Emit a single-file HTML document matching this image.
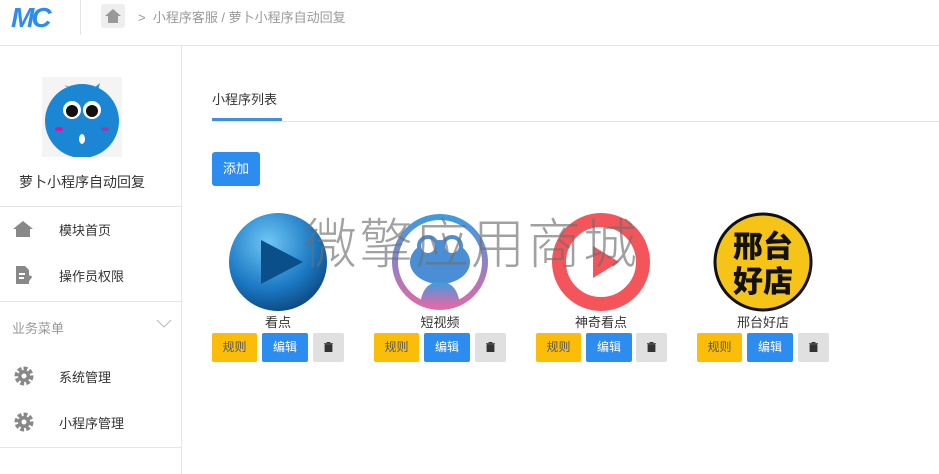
<!DOCTYPE html>
<html><head><meta charset="utf-8"><style>
*{margin:0;padding:0;box-sizing:border-box}
body{width:939px;height:474px;overflow:hidden;background:#fff;font-family:"Liberation Sans","Noto Sans CJK SC",sans-serif;font-size:13px;color:#333;position:relative}
.a{position:absolute}
.hdr{left:0;top:0;width:939px;height:46px;border-bottom:1px solid #e5e5e5}
.side{left:0;top:46px;width:182px;height:428px;border-right:1px solid #e5e5e5}
.hl{position:absolute;left:0;width:181px;height:1px;background:#e5e5e5}
.mi{position:absolute;left:59px;font-size:13px;color:#333}
.btn{position:absolute;height:29px;border-radius:2px;font-size:12px;text-align:center;line-height:29px}
.y{background:#fbbd08;color:#555;width:45px}
.b{background:#2d8cf0;color:#fff;width:46px}
.g{background:#e0e0e0;color:#333;width:31px}
.g svg{margin-top:9px}
.nm{position:absolute;top:312px;font-size:13px;text-align:center;width:140px}
</style></head><body>
<div class="a hdr"></div>
<div class="a" style="left:11px;top:2px;font:italic 900 28px 'Liberation Sans',sans-serif;color:#2d8cf0;letter-spacing:-3px">MC</div>
<div class="a" style="left:80px;top:0;width:1px;height:35px;background:#e5e5e5"></div>
<div class="a" style="left:101px;top:4px;width:24px;height:24px;background:#eee;border-radius:3px"></div>
<svg class="a" style="left:104px;top:7px" width="18" height="18" viewBox="0 0 18 18"><path d="M9 2 L1 9 H4 V16 H14 V9 H17Z" fill="#999"/></svg>
<div class="a" style="left:138px;top:7px;color:#999;font-size:13px">&gt;&nbsp;&nbsp;小程序客服 / 萝卜小程序自动回复</div>
<div class="a side"></div>
<svg class="a" style="left:42px;top:77px" width="80" height="80" viewBox="0 0 80 80"><rect width="80" height="80" fill="#f4f4f4"/><path d="M22 8 L34 16 L46 16 L58 6 L54 20 Z" fill="#1f8fd8"/><circle cx="40" cy="44" r="37" fill="#1b86d4"/><circle cx="30" cy="33" r="9" fill="#fff"/><circle cx="50" cy="33" r="9" fill="#fff"/><circle cx="30" cy="34" r="6" fill="#111"/><circle cx="50" cy="34" r="6" fill="#111"/><ellipse cx="40" cy="62" rx="3" ry="5" fill="#fff"/><ellipse cx="17" cy="52" rx="4" ry="2" fill="#f09"/><ellipse cx="63" cy="52" rx="4" ry="2" fill="#f09" opacity=".6"/></svg>
<div class="a" style="left:19px;top:172px;font-size:14px">萝卜小程序自动回复</div>
<div class="hl" style="top:206px"></div>
<svg class="a" style="left:13px;top:220px" width="20" height="18" viewBox="0 0 20 18"><path d="M10 1 L0 9 H3 V17 H17 V9 H20Z" fill="#888"/></svg>
<div class="mi" style="top:220px">模块首页</div>
<svg class="a" style="left:15px;top:265px" width="18" height="20" viewBox="0 0 18 20"><path d="M1 1 H10 L14 5 V19 H1Z" fill="#888"/><path d="M4 9 H10 M4 13 H9" stroke="#fff" stroke-width="2"/><path d="M11 18 L16 11" stroke="#888" stroke-width="3"/></svg>
<div class="mi" style="top:266px">操作员权限</div>
<div class="hl" style="top:301px"></div>
<div class="a" style="left:12px;top:318px;color:#999">业务菜单</div>
<svg class="a" style="left:156px;top:319px" width="16" height="10"><path d="M1 1 L8 8 L15 1" stroke="#bbb" fill="none"/></svg>
<svg class="a" style="left:14px;top:366px" width="20" height="20" viewBox="0 0 20 20"><circle cx="10" cy="10" r="7" fill="none" stroke="#888" stroke-width="5" stroke-dasharray="3.5 1.9"/><circle cx="10" cy="10" r="6" fill="#888"/><circle cx="10" cy="10" r="2.5" fill="#fff"/></svg>
<div class="mi" style="top:367px">系统管理</div>
<svg class="a" style="left:14px;top:412px" width="20" height="20" viewBox="0 0 20 20"><circle cx="10" cy="10" r="7" fill="none" stroke="#888" stroke-width="5" stroke-dasharray="3.5 1.9"/><circle cx="10" cy="10" r="6" fill="#888"/><circle cx="10" cy="10" r="2.5" fill="#fff"/></svg>
<div class="mi" style="top:413px">小程序管理</div>
<div class="hl" style="top:447px"></div>

<div class="a" style="left:212px;top:89px;font-size:13px">小程序列表</div>
<div class="a" style="left:212px;top:121px;width:727px;height:1px;background:#e5e5e5"></div>
<div class="a" style="left:212px;top:118px;width:70px;height:3px;background:#3d8fe0"></div>
<div class="a" style="left:212px;top:152px;width:48px;height:34px;background:#2d8cf0;color:#fff;border-radius:3px;text-align:center;line-height:34px;font-size:13px">添加</div>

<svg class="a" style="left:228px;top:212px" width="100" height="100" viewBox="0 0 100 100"><defs><radialGradient id="g1" cx=".4" cy=".3" r=".8"><stop offset="0" stop-color="#6fc6f5"/><stop offset=".6" stop-color="#1a78c2"/><stop offset="1" stop-color="#0a3c70"/></radialGradient></defs><circle cx="50" cy="50" r="49" fill="url(#g1)"/><path d="M33 28 L75 50 L33 72Z" fill="#0a4e8a"/></svg>
<svg class="a" style="left:390px;top:212px" width="100" height="100" viewBox="0 0 100 100"><defs><linearGradient id="g2" x1="0" y1="0" x2="0" y2="1"><stop offset="0" stop-color="#3d9be0"/><stop offset="1" stop-color="#e06aa8"/></linearGradient></defs><circle cx="50" cy="50" r="45" fill="#fff" stroke="url(#g2)" stroke-width="6"/><ellipse cx="50" cy="50" rx="30" ry="22" fill="#4a8fd6"/><path d="M30 94 Q32 70 50 70 Q68 70 70 94Z" fill="url(#g2)"/><circle cx="38" cy="34" r="9" fill="#fff" stroke="#4a8fd6" stroke-width="4"/><circle cx="62" cy="34" r="9" fill="#fff" stroke="#4a8fd6" stroke-width="4"/></svg>
<svg class="a" style="left:551px;top:212px" width="100" height="100" viewBox="0 0 100 100"><circle cx="50" cy="50" r="42" fill="#fff" stroke="#f4555a" stroke-width="14"/><path d="M42 34 L68 50 L42 66Z" fill="#f4555a"/></svg>
<svg class="a" style="left:713px;top:212px" width="100" height="100" viewBox="0 0 100 100"><circle cx="50" cy="50" r="48" fill="#f6c417" stroke="#111" stroke-width="3"/><text x="50" y="45" text-anchor="middle" font-size="30" font-weight="900" font-family="Noto Sans CJK SC" fill="#111">邢台</text><text x="50" y="80" text-anchor="middle" font-size="30" font-weight="900" font-family="Noto Sans CJK SC" fill="#111">好店</text></svg>

<div class="a" style="left:303px;top:200px;font-size:54px;color:rgba(110,110,110,.65);letter-spacing:2px;font-family:'Noto Sans CJK SC',sans-serif;font-weight:300">微擎应用商城</div>

<div class="nm" style="left:208px">看点</div>
<div class="nm" style="left:370px">短视频</div>
<div class="nm" style="left:531px">神奇看点</div>
<div class="nm" style="left:693px">邢台好店</div>

<div class="btn y" style="left:212px;top:333px">规则</div><div class="btn b" style="left:262px;top:333px">编辑</div><div class="btn g" style="left:313px;top:333px"><svg width="9" height="10" viewBox="0 0 9 10"><path d="M0 1.5H9M3 1.5V0H6V1.5M1 2.5H8V10H1Z" fill="#333" stroke="#333" stroke-width="0.8"/></svg></div>
<div class="btn y" style="left:374px;top:333px">规则</div><div class="btn b" style="left:424px;top:333px">编辑</div><div class="btn g" style="left:475px;top:333px"><svg width="9" height="10" viewBox="0 0 9 10"><path d="M0 1.5H9M3 1.5V0H6V1.5M1 2.5H8V10H1Z" fill="#333" stroke="#333" stroke-width="0.8"/></svg></div>
<div class="btn y" style="left:536px;top:333px">规则</div><div class="btn b" style="left:586px;top:333px">编辑</div><div class="btn g" style="left:636px;top:333px"><svg width="9" height="10" viewBox="0 0 9 10"><path d="M0 1.5H9M3 1.5V0H6V1.5M1 2.5H8V10H1Z" fill="#333" stroke="#333" stroke-width="0.8"/></svg></div>
<div class="btn y" style="left:697px;top:333px">规则</div><div class="btn b" style="left:747px;top:333px">编辑</div><div class="btn g" style="left:798px;top:333px"><svg width="9" height="10" viewBox="0 0 9 10"><path d="M0 1.5H9M3 1.5V0H6V1.5M1 2.5H8V10H1Z" fill="#333" stroke="#333" stroke-width="0.8"/></svg></div>
</body></html>
